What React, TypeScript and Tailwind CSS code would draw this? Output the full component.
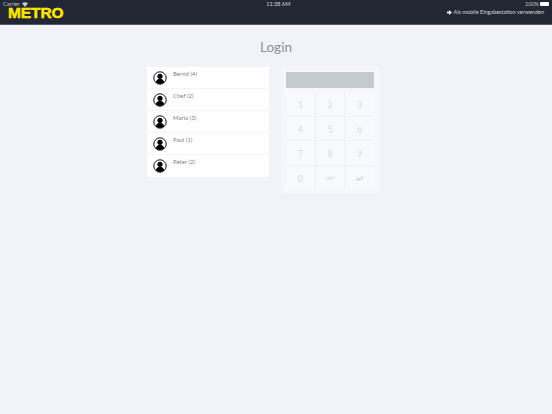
import { CornerDownLeft } from 'lucide-react'

const users = ['Bernd (4)', 'Chef (2)', 'Maria (3)', 'Paul (1)', 'Peter (2)']
const keys = ['1', '2', '3', '4', '5', '6', '7', '8', '9', '0', 'del', 'enter']

function Avatar() {
  return (
    <svg width="14" height="14" viewBox="0 0 14 14" className="shrink-0">
      <circle cx="7" cy="7" r="6.2" fill="#fff" stroke="#111" strokeWidth="1" />
      <circle cx="7" cy="5.3" r="2.6" fill="#000" />
      <path d="M2.8 11.2c.5-2 2-2.8 3-3.1h2.4c1 .3 2.5 1.1 3 3.1A5.6 5.6 0 0 1 7 13a5.6 5.6 0 0 1-4.2-1.8z" fill="#000" />
    </svg>
  )
}

export default function App() {
  return (
    <div className="relative h-[414px] w-[552px] overflow-hidden bg-[#f1f3f8] font-['Lato',sans-serif]">
      <div className="relative h-[25px] border-b border-[#555a66] bg-[#222733]">
        <div className="flex h-[7px] items-center justify-between px-[3px] pt-[1px] text-[5.5px] leading-[6px] text-[#c4c6cb]">
          <div className="flex items-center gap-[2px]">
            <span>Carrier</span>
            <svg width="6" height="5" viewBox="0 0 6 5">
              <path d="M0 1.5a4.2 4.2 0 0 1 6 0L3 5z" fill="#c4c6cb" />
            </svg>
          </div>
          <span className="pl-[4px] text-[#d8d9dc]">11:38 AM</span>
          <div className="flex items-center gap-[1px]">
            <span>100%</span>
            <div className="h-[4px] w-[9px] rounded-[1px] bg-white" />
          </div>
        </div>
        <div className="absolute left-[8px] top-[7px] font-['Liberation_Sans',sans-serif] text-[15.5px] font-bold leading-[12px] tracking-[-0.1px] text-[#ffe600] [-webkit-text-stroke:0.5px_#ffe600]">
          METRO
        </div>
        <div className="flex items-center justify-end gap-[2px] pr-[8px] pt-[1px] text-[5.5px] leading-[8px] text-[#d0d2d6]">
          <svg width="5" height="5" viewBox="0 0 5 5">
            <path d="M0 1.5h2V0l3 2.5L2 5V3.5H0z" fill="#e8e9eb" />
          </svg>
          <span>Als mobile Eingabestation verwenden</span>
        </div>
      </div>

      <h1 className="mt-[13px] text-center text-[13.5px] leading-[18px] text-[#8b909a]">Login</h1>

      <div className="mt-[11px] flex items-start gap-[12px] pl-[147px]">
        <div className="w-[122px] bg-white">
          {users.map((name, i) => (
            <div key={name} className={`flex h-[22.1px] items-start pl-[6px] ${i < users.length - 1 ? 'border-b border-[#f3f4f7]' : ''}`}>
              <div className="pt-[4px]">
                <Avatar />
              </div>
              <span className="pl-[6px] pt-[2.5px] text-[6px] leading-[8px] text-[#7d7f85]">{name}</span>
            </div>
          ))}
        </div>

        <div className="-mt-[1px] w-[98px] bg-[#f6f7fb] px-[5px] pb-[4px] pt-[6px]">
          <div className="h-[16px] bg-[#c4cacd]" />
          <div className="mt-[4px] grid grid-cols-3 gap-[1px] bg-[#eff0f4]">
            {keys.map(k => (
              <div key={k} className={`flex h-[23.5px] items-center justify-center bg-[#f8f9fd] pt-[2px] text-[#d9dbdf] ${k === 'del' ? 'text-[6.5px]' : 'text-[9px]'}`}>
                {k === 'enter' ? <CornerDownLeft size={7} strokeWidth={2} className="text-[#a9abb0]" /> : k}
              </div>
            ))}
          </div>
        </div>
      </div>
    </div>
  )
}
